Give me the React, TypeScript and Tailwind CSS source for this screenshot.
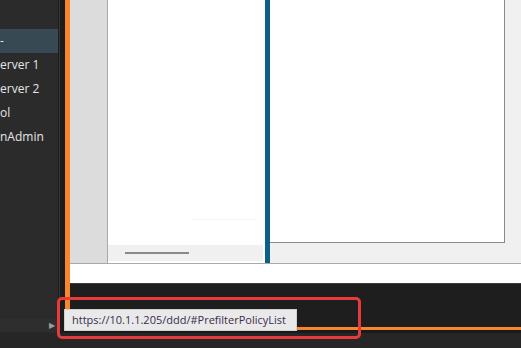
const navRows: { label: string; active?: boolean }[] = [
  { label: '-', active: true },
  { label: 'erver 1' },
  { label: 'erver 2' },
  { label: 'ol' },
  { label: 'nAdmin' },
]

const Sidebar = () => (
  <div className="flex h-full w-[58px] flex-col overflow-hidden bg-[#2b2b2b]">
    <div className="flex flex-col pt-[29px]">
      {navRows.map((row) => (
        <div
          key={row.label}
          className={
            row.active
              ? 'flex h-[24px] items-center bg-[#374953] text-[#e6e6e6]'
              : 'flex h-[24px] items-center text-[#e6e6e6]'
          }
        >
          <span className="whitespace-nowrap">{row.label}</span>
        </div>
      ))}
    </div>
    <div className="flex-1" />
    <div className="mb-[2px] flex h-[12px] items-center justify-end bg-[#2e2e2e] pr-[3px]">
      <span className="text-[8px] leading-none text-[#9a9a9a]">▶</span>
    </div>
  </div>
)

const MainPane = () => (
  <div className="flex h-[327px] flex-col">
    <div className="flex h-[264px] border-b border-[#a9a9a9]">
      <div className="w-[37px] bg-[#dcdcdc]" />
      <div className="flex w-[158px] flex-col border-l border-[#a9a9a9] bg-white pb-[2px] pr-[2px]">
        <div className="flex-1">
          <div className="ml-[84px] mt-[219px] h-px w-[65px] bg-[#f3f3f3]" />
        </div>
        <div className="flex h-[16px] items-center bg-[#f0f0f0] pl-[17px]">
          <div className="h-[2px] w-[64px] bg-[#8a8a8a]" />
        </div>
      </div>
      <div className="w-[5px] bg-[#0d5f8b]" />
      <div className="flex flex-1 flex-col bg-[#f0f0f0]">
        <div className="h-[243px] w-[235px] border-r border-b border-[#8a8a8a] bg-white" />
      </div>
    </div>
    <div className="h-[19px] bg-white" />
    <div className="flex-1 border-t border-[#3c3c3c] bg-[#1e1e1e]" />
  </div>
)

export default function App() {
  return (
    <div
      className="relative flex h-[348px] w-[521px] flex-col overflow-hidden bg-[#262626] text-[12px]"
      style={{ fontFamily: '"Open Sans", "Noto Sans", sans-serif' }}
    >
      <div className="flex h-[333px]">
        <Sidebar />
        <div className="flex w-[7px] bg-[#1c1c1c]">
          <div className="ml-[1px] w-px bg-[#383838]" />
        </div>
        <div className="flex flex-1 flex-col">
          <div className="border-b-[3px] border-l-[5px] border-[#f7862c]">
            <MainPane />
          </div>
          <div className="flex-1 bg-[#1a1a1a]" />
        </div>
      </div>
      <div className="flex-1 bg-[#262626]" />

      <div className="absolute left-[64px] top-[309px] flex h-[22px] w-[233px] items-center border border-[#d0d0d0] bg-[#e9e9e9] pl-[7px] text-[11px] text-[#3b2c4c]">
        https://10.1.1.205/ddd/#PrefilterPolicyList
      </div>
      <div className="absolute left-[57px] top-[297px] h-[42px] w-[304px] rounded-[5px] border-[3px] border-[#e63a3d]" />
    </div>
  )
}
